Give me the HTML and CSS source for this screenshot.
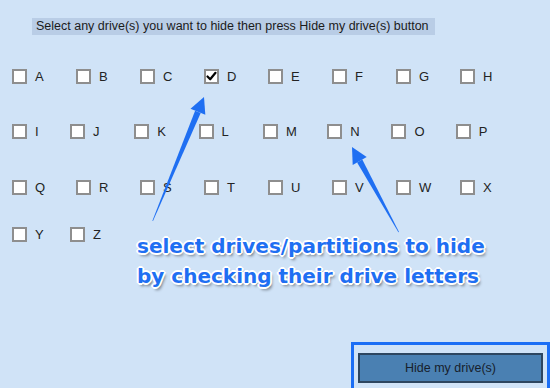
FILE: index.html
```html
<!DOCTYPE html>
<html>
<head>
<meta charset="utf-8">
<link rel="stylesheet" href="styles.css">
</head>
<body>
<div class="page">
  <div class="hint">Select any drive(s) you want to hide then press Hide my drive(s) button</div>

  <div class="drives">
    <div class="row row-a">
      <label class="item"><span class="box"></span><span class="letter">A</span></label>
      <label class="item"><span class="box"></span><span class="letter">B</span></label>
      <label class="item"><span class="box"></span><span class="letter">C</span></label>
      <label class="item"><span class="box checked"><svg viewBox="0 0 11 11" width="11" height="11"><path d="M1.5 5.5 L4.2 8.3 L9.5 1.8" fill="none" stroke="#000" stroke-width="2.2" stroke-linecap="round" stroke-linejoin="round"/></svg></span><span class="letter">D</span></label>
      <label class="item"><span class="box"></span><span class="letter">E</span></label>
      <label class="item"><span class="box"></span><span class="letter">F</span></label>
      <label class="item"><span class="box"></span><span class="letter">G</span></label>
      <label class="item"><span class="box"></span><span class="letter">H</span></label>
    </div>
    <div class="row row-b row-2">
      <label class="item"><span class="box"></span><span class="letter">I</span></label>
      <label class="item"><span class="box"></span><span class="letter">J</span></label>
      <label class="item"><span class="box"></span><span class="letter">K</span></label>
      <label class="item"><span class="box"></span><span class="letter">L</span></label>
      <label class="item"><span class="box"></span><span class="letter">M</span></label>
      <label class="item"><span class="box"></span><span class="letter">N</span></label>
      <label class="item"><span class="box"></span><span class="letter">O</span></label>
      <label class="item"><span class="box"></span><span class="letter">P</span></label>
    </div>
    <div class="row row-a row-3">
      <label class="item"><span class="box"></span><span class="letter">Q</span></label>
      <label class="item"><span class="box"></span><span class="letter">R</span></label>
      <label class="item"><span class="box"></span><span class="letter">S</span></label>
      <label class="item"><span class="box"></span><span class="letter">T</span></label>
      <label class="item"><span class="box"></span><span class="letter">U</span></label>
      <label class="item"><span class="box"></span><span class="letter">V</span></label>
      <label class="item"><span class="box"></span><span class="letter">W</span></label>
      <label class="item"><span class="box"></span><span class="letter">X</span></label>
    </div>
    <div class="row row-b row-4">
      <label class="item"><span class="box"></span><span class="letter">Y</span></label>
      <label class="item"><span class="box"></span><span class="letter">Z</span></label>
    </div>
  </div>

  <div class="actions">
    <button class="hide-btn">Hide my drive(s)</button>
  </div>

  <svg class="arrows" width="550" height="388" viewBox="0 0 550 388">
    <polygon fill="#1f6ff2" points="153,221 200.7,112.9 195.1,110.7 152.4,220.8"/>
    <polygon fill="#1f6ff2" points="204,97 205.3,114.8 190.5,108.8"/>
    <polygon fill="#1f6ff2" points="399,232 362.3,159.5 357.1,162.4 398.4,232.3"/>
    <polygon fill="#1f6ff2" points="352,147 366.7,157.1 352.7,164.9"/>
  </svg>

  <div class="note">select drives/partitions to hide<br>by checking their drive letters</div>

  <div class="highlight"></div>
</div>
</body>
</html>
```

FILE: styles.css
```css
html, body {
  margin: 0;
  padding: 0;
}
body {
  width: 550px;
  height: 388px;
  overflow: hidden;
  background: #d0e3f7;
  font-family: "Liberation Sans", Arial, sans-serif;
}
.page {
  position: relative;
  width: 550px;
  height: 388px;
  padding-top: 18px;
  box-sizing: border-box;
}
.hint {
  margin-left: 32px;
  width: 403px;
  height: 17px;
  line-height: 17px;
  padding-left: 4px;
  box-sizing: border-box;
  background: #b9cde6;
  color: #1b1b1b;
  font-size: 12.5px;
  white-space: nowrap;
}
.drives {
  margin-top: 34px;
  padding-left: 12px;
}
.row {
  display: flex;
  height: 15px;
  align-items: center;
}
.row-2 { margin-top: 40px; }
.row-3 { margin-top: 41px; }
.row-4 { margin-top: 32px; }
.row-a .item { width: 64px; }
.row-b .item { width: 64.3px; }
.row-b .item:first-child { width: 58px; }
.item {
  display: flex;
  align-items: center;
  gap: 8px;
  flex: none;
}
.box {
  width: 15px;
  height: 15px;
  box-sizing: border-box;
  border: 2px solid #8e8e8e;
  background: #fff;
  display: flex;
  align-items: center;
  justify-content: center;
}
.letter {
  font-size: 13px;
  color: #232323;
  line-height: 15px;
}
.actions {
  margin-top: 111px;
  padding-left: 358px;
}
.hide-btn {
  display: block;
  width: 185px;
  height: 30px;
  margin: 0;
  padding: 0;
  background: #4a80b2;
  border: 2px solid #2d4660;
  color: #17202c;
  font-family: "Liberation Sans", Arial, sans-serif;
  font-size: 12.5px;
}
.arrows {
  position: absolute;
  left: 0;
  top: 0;
}
.note {
  position: absolute;
  left: 137px;
  top: 231px;
  font-family: "DejaVu Sans", sans-serif;
  font-size: 20px;
  line-height: 30px;
  font-weight: bold;
  color: #1f6ff2;
  white-space: nowrap;
  text-shadow:
    -1px -1px 0 #fff, 1px -1px 0 #fff, -1px 1px 0 #fff, 1px 1px 0 #fff,
    0 -2px 0 #fff, 0 2px 0 #fff, -2px 0 0 #fff, 2px 0 0 #fff,
    2px 3px 3px rgba(0, 0, 0, 0.45);
}
.highlight {
  position: absolute;
  left: 351px;
  top: 342px;
  width: 199px;
  height: 60px;
  box-sizing: border-box;
  border: 3px solid #1b6ef5;
}
```
